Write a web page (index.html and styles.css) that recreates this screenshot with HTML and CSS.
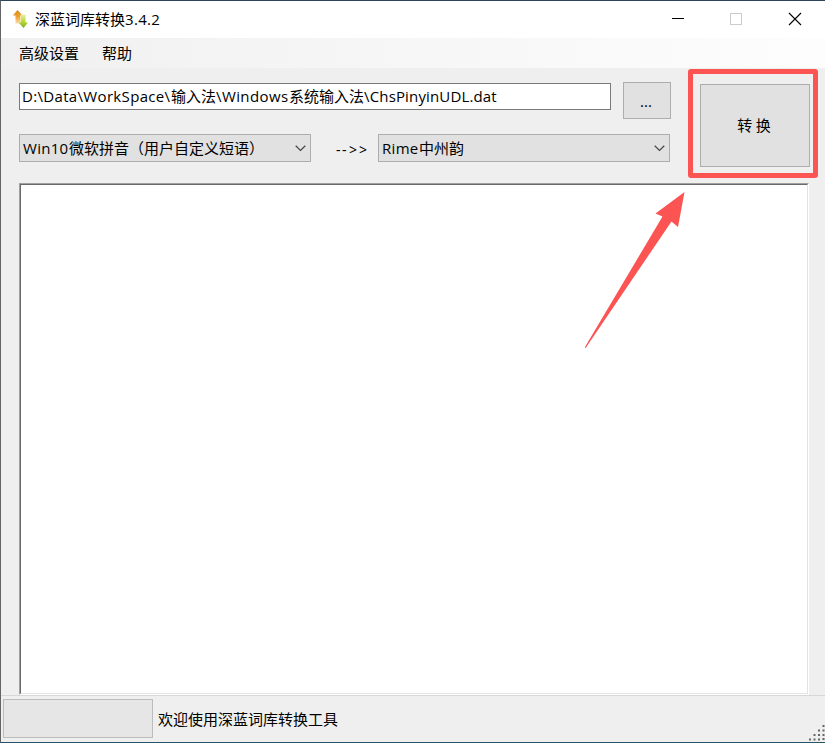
FILE: index.html
```html
<!DOCTYPE html>
<html lang="zh-CN">
<head>
<meta charset="utf-8">
<title>深蓝词库转换3.4.2</title>
<link rel="stylesheet" href="styles.css">
</head>
<body>
<div class="window">
  <header class="titlebar">
    <svg class="app-icon" width="16" height="20" viewBox="0 0 16 20">
      <defs>
        <linearGradient id="up" x1="0" y1="0" x2="0" y2="1"><stop offset="0" stop-color="#d88b16"/><stop offset=".5" stop-color="#f0a030"/><stop offset="1" stop-color="#fbe0b0"/></linearGradient>
        <linearGradient id="down" x1="0" y1="0" x2="0" y2="1"><stop offset="0" stop-color="#e6f0a8"/><stop offset=".5" stop-color="#b9dc35"/><stop offset="1" stop-color="#80ad27"/></linearGradient>
      </defs>
      <path d="M5.500 1L10.500 6.500H8.300V14.500H3.500V6.500H.8Z" fill="url(#up)"/>
      <path d="M8.800 5.500H13.500V13.500H16L11.500 19L6.500 13.500H8.800Z" fill="url(#down)"/>
    </svg>
    <h1 class="title">深蓝词库转换<span class="latin run-version">3.4.2</span></h1>
    <svg class="controls" width="130" height="14" viewBox="0 0 130 14" fill="none">
      <path d="M0 6.500H12" stroke="#000"/>
      <rect x="58.500" y="1.500" width="11" height="11" stroke="#ccc"/>
      <path d="M117 1L129 13M129 1L117 13" stroke="#000" stroke-width="1.1"/>
    </svg>
  </header>
  <nav class="menu"><span>高级设置</span><span>帮助</span></nav>
  <main class="main">
    <div class="toolbar">
      <div class="fields">
        <div class="file-row">
          <div class="path"><span class="latin run-drive">D:\Data\WorkSpace\</span>输入法<span class="latin run-win">\Windows</span>系统输入法<span class="latin run-file">\ChsPinyinUDL.dat</span></div>
          <div class="button browse">...</div>
        </div>
        <div class="format-row">
          <div class="combo"><span class="latin run-win10">Win10</span>微软拼音（用户自定义短语）<svg class="chevron" width="11" height="7" viewBox="0 0 11 7"><path d="M.7 .8L5.500 5.500L10.300 .8"/></svg></div>
          <div class="direction"><span class="dashes">--</span><span class="angles">&gt;&gt;</span></div>
          <div class="combo"><span class="latin run-rime">Rime</span>中州韵<svg class="chevron" width="11" height="7" viewBox="0 0 11 7"><path d="M.7 .8L5.500 5.500L10.300 .8"/></svg></div>
        </div>
      </div>
      <div class="highlight"><div class="button convert">转 换</div></div>
    </div>
    <div class="output"></div>
  </main>
  <footer class="status">
    <div class="progress"></div>
    <span class="message">欢迎使用深蓝词库转换工具</span>
    <svg class="grip" width="18" height="18" viewBox="0 0 18 18" fill="#666">
      <path d="M15.500 1h2v2h-2zM11 5.500h2v2h-2zM15.500 5.500h2v2h-2zM6.500 10h2v2h-2zM11 10h2v2h-2zM15.500 10h2v2h-2zM2 14.500h2v2h-2zM6.500 14.500h2v2h-2zM11 14.500h2v2h-2zM15.500 14h2v2h-2z"/>
    </svg>
  </footer>
  <svg class="arrow" width="102" height="160" viewBox="0 0 102 160"><path d="M101.500 1L95 36L88.500 30.500L3 156.500Q2 157.500 2 156L79.500 25.500L72.500 22.500Z" fill="#fc5353"/></svg>
</div>
</body>
</html>
```
FILE: styles.css
```css
*, *::before { box-sizing: border-box; }
body { margin: 0; overflow: hidden; }
.window {
  position: relative;
  display: flex;
  flex-direction: column;
  width: 825px;
  height: 743px;
  border: solid #626467;
  border-width: 1px 0 1px 1px;
  border-top-color: #2f455d;
  border-bottom-color: #28536d;
  background: #efefef;
  color: #000;
  font: 15px/20px "Noto Sans CJK SC", sans-serif;
  white-space: nowrap;
}
.latin { display: inline-block; font-family: "Open Sans", sans-serif; font-size: 15px; }
.titlebar { display: flex; align-items: center; height: 37px; padding: 0 23px 2px 11px; background: #fff; }
.app-icon { margin-right: 7px; }
.title { margin: 0; font: inherit; }
.controls { margin-left: auto; }
.menu { display: flex; gap: 23px; height: 30px; padding: 5px 18px; background: linear-gradient(90deg, #f0f0f0, #fdfdfd); }
.main { height: 627px; padding: 1px 16px 0 18px; }
.toolbar { display: flex; height: 114px; }
.fields { width: 652px; padding-top: 13px; }
.file-row { display: flex; gap: 12px; height: 52px; }
.path { width: 592px; height: 27px; margin-top: 1px; padding: 2px; border: 1px solid #7a7a7a; background: #fff; line-height: 20px; }
.button { border: 1px solid #adadad; background: #e1e1e1; text-align: center; }
.browse { width: 48px; height: 37px; padding: 8px 2px 0 0; font-family: "Open Sans", sans-serif; }
.format-row { display: flex; }
.combo { display: flex; align-items: center; width: 292px; height: 28px; padding: 0 4px 0 3px; border: 1px solid #adadad; background: #e1e1e1; }
.chevron { margin-left: auto; fill: none; stroke: #444; stroke-width: 1.2; }
.direction { display: flex; width: 67px; padding: 6px 0 0 25px; font-family: "Noto Sans", sans-serif; font-size: 14px; }
.dashes { width: 13px; letter-spacing: 1.5px; }
.angles { letter-spacing: 2px; }
.highlight { width: 130px; height: 109px; margin-left: 17px; padding: 10px 3px 0 7px; border: 5px solid #fc5353; border-radius: 3px; flex: none; }
.convert { width: 110px; height: 83px; padding: 30px 2px 0 0; }
.output { height: 512px; border: 1px solid; border-color: #a0a0a0 #fff #fff #a0a0a0; background: #fff; }
.output::before { content: ""; display: block; height: 510px; border: 1px solid; border-color: #696969 #e3e3e3 #e3e3e3 #696969; }
.status { position: relative; display: flex; height: 47px; padding: 4px 2px; border-top: 1px solid #d7d7d7; }
.progress { width: 150px; height: 39px; margin-top: -1px; border: 1px solid #bcbcbc; background: #e6e6e6; }
.message { margin: 9px 0 0 5px; }
.grip { position: absolute; right: 0; bottom: 0; }
.arrow { position: absolute; left: 582px; top: 190px; }
.run-version { width: 35px; letter-spacing: .3px; }
.run-drive { width: 149px; letter-spacing: .33px; }
.run-win { width: 73px; letter-spacing: .4px; }
.run-file { width: 133px; letter-spacing: .15px; }
.run-win10 { width: 46px; letter-spacing: .3px; }
.run-rime { width: 37px; letter-spacing: .3px; }
```
